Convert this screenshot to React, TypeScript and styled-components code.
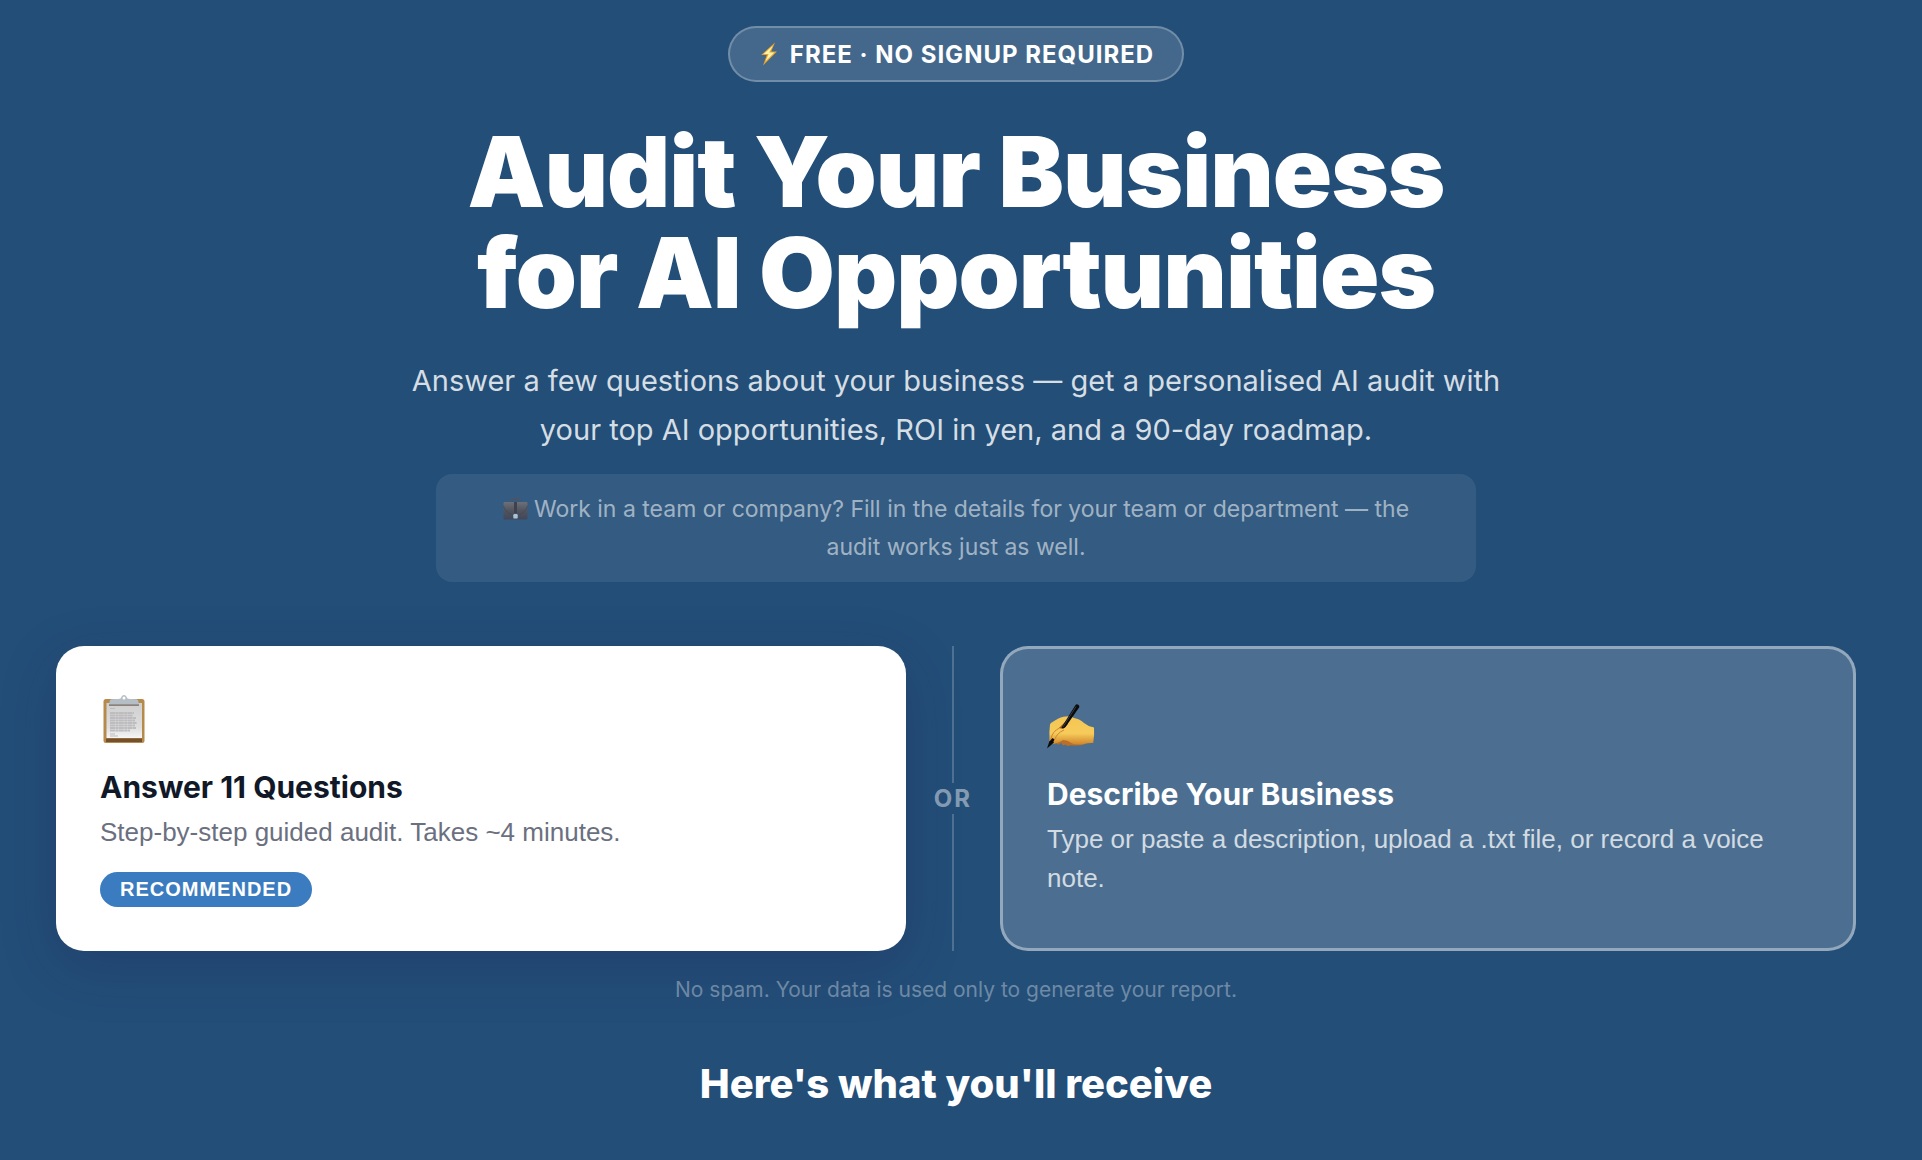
import React from "react";
import styled, { createGlobalStyle } from "styled-components";

const BODY_FONT = '"Inter", "Roboto", sans-serif';
const HEAD_FONT = '"Inter", sans-serif';
const BUTTON_FONT = '"Liberation Sans", Arial, sans-serif';

const GlobalStyle = createGlobalStyle`
  *, *::before, *::after { box-sizing: border-box; }
  html { background: #234e78; }
  body { margin: 0; font-family: ${BODY_FONT}; color: #fff; }
  h1, h2, p { margin: 0; }
`;

const Page = styled.main`
  min-height: 100vh;
  padding: 26px 66px 32px 56px;
  background: #234e78;
`;

const Hero = styled.header`
  display: flex;
  flex-direction: column;
  align-items: center;
  text-align: center;
`;

const Badge = styled.div`
  display: flex;
  align-items: center;
  gap: 12px;
  height: 56px;
  padding: 0 28px 0 30px;
  border: 2px solid rgba(255, 255, 255, 0.25);
  border-radius: 28px;
  background: rgba(255, 255, 255, 0.15);
  font-size: 24px;
  font-weight: 700;
  letter-spacing: 1px;
  text-transform: uppercase;
`;

const Title = styled.h1`
  margin-top: 39px;
  font-family: ${HEAD_FONT};
  font-size: 98px;
  font-weight: 900;
  line-height: 101px;
  letter-spacing: -1px;
`;

const Lead = styled.p`
  max-width: 1140px;
  margin-top: 33px;
  font-size: 29px;
  line-height: 49px;
  color: rgba(255, 255, 255, 0.82);
`;

const Note = styled.p`
  width: 100%;
  max-width: 1040px;
  margin-top: 20px;
  padding: 16px 40px;
  border-radius: 16px;
  background: rgba(255, 255, 255, 0.08);
  font-size: 23px;
  line-height: 38px;
  color: rgba(255, 255, 255, 0.55);
`;

const Choices = styled.section`
  display: grid;
  grid-template-columns: 850fr 94px 856fr;
  margin-top: 64px;
`;

const Choice = styled.button<{ $primary?: boolean }>`
  display: flex;
  flex-direction: column;
  align-items: flex-start;
  justify-content: center;
  min-height: 305px;
  padding: 44px 44px 40px;
  border: ${(p) => (p.$primary ? "0" : "3px solid rgba(255, 255, 255, 0.4)")};
  border-radius: 28px;
  background: ${(p) => (p.$primary ? "#fff" : "rgba(255, 255, 255, 0.19)")};
  box-shadow: ${(p) => (p.$primary ? "0 16px 56px rgba(30, 27, 75, 0.24)" : "none")};
  color: ${(p) => (p.$primary ? "#111827" : "#fff")};
  font-family: ${BUTTON_FONT};
  text-align: left;
  cursor: pointer;
`;

const ChoiceTitle = styled.span`
  margin-top: 20px;
  font-family: ${HEAD_FONT};
  font-size: 30px;
  font-weight: 700;
  line-height: 46px;
`;

const ChoiceText = styled.span<{ $primary?: boolean }>`
  margin-top: 3px;
  font-size: 26px;
  line-height: 39px;
  color: ${(p) => (p.$primary ? "#6b7080" : "rgba(255, 255, 255, 0.75)")};
`;

const Tag = styled.span`
  margin-top: 20px;
  padding: 0 20px;
  border-radius: 18px;
  background: #3b7bbf;
  color: #fff;
  font-size: 20px;
  font-weight: 700;
  line-height: 35px;
  letter-spacing: 1px;
`;

const Divider = styled.div`
  display: flex;
  flex-direction: column;
  align-items: center;
  font-size: 24px;
  font-weight: 700;
  line-height: 31px;
  letter-spacing: 2px;
  color: rgba(255, 255, 255, 0.45);

  &::before,
  &::after {
    content: "";
    flex: 1;
    width: 2px;
    background: rgba(255, 255, 255, 0.2);
  }
`;

const Privacy = styled.p`
  margin-top: 22px;
  font-size: 21px;
  line-height: 34px;
  text-align: center;
  color: rgba(255, 255, 255, 0.35);
`;

const SectionTitle = styled.h2`
  margin-top: 52px;
  font-family: ${HEAD_FONT};
  font-size: 40px;
  font-weight: 800;
  line-height: 50px;
  text-align: center;
`;

const EmojiSvg = styled.svg`
  flex: none;
  display: block;
`;

const BriefSvg = styled.svg`
  display: inline-block;
  margin-right: 6px;
  vertical-align: -3px;
`;

function Bolt() {
  return (
    <EmojiSvg width="18" height="24" viewBox="0 0 18 24" aria-hidden="true">
      <path d="M15 .5 1.2 13h5.6L3 23.5 17 9.6h-5.8z" fill="#e9a22c" />
      <path d="M13 3.6 3.6 12h5L5.4 19.4 14.4 10.6H9.2z" fill="#fff3a8" />
    </EmojiSvg>
  );
}

function Briefcase() {
  return (
    <BriefSvg width="25" height="22" viewBox="0 0 25 22" aria-hidden="true">
      <defs>
        <linearGradient id="case" x2="0" y2="1">
          <stop stopColor="#6d7079" />
          <stop offset=".5" stopColor="#50545f" />
          <stop offset="1" stopColor="#41465a" />
        </linearGradient>
      </defs>
      <path d="M8.5 4V1.8q0-.8.8-.8h6.4q.8 0 .8.8V4" fill="none" stroke="#50545f" strokeWidth="1.4" />
      <rect x=".5" y="4" width="24" height="17.6" rx="1" fill="url(#case)" />
      <path d="M.5 8q2 7 9 8.5h6q7-1.5 9-8.5" fill="none" stroke="#444957" strokeWidth=".8" />
      <rect x="11" y="4" width="3" height="11" fill="#3e424f" />
      <rect x="10.3" y="16" width="4.4" height="4.6" rx="1.2" fill="#a9c4d8" />
    </BriefSvg>
  );
}

function Clipboard() {
  return (
    <EmojiSvg width="48" height="50" viewBox="0 0 48 50" aria-hidden="true">
      <defs>
        <linearGradient id="paper" x2="0" y2="1">
          <stop stopColor="#cfcfd0" />
          <stop offset=".7" stopColor="#dededf" />
          <stop offset="1" stopColor="#f6f6f7" />
        </linearGradient>
      </defs>
      <rect x="3.5" y="5" width="41" height="44" rx="2.5" fill="#b58a4b" />
      <path d="M6 44.5h36v3.5H6z" fill="#74502d" />
      <path d="M6.5 9h35.5v35H6.5z" fill="url(#paper)" />
      <path d="M10 6q1-1 4-1h4.5q2.5 0 3-2.2Q22.2 1 24 1t2.5 1.8Q27 5 29.5 5H34q3 0 4 1l1 4.5H9z" fill="#b6bec5" />
      <circle cx="24" cy="4" r="1.5" fill="#fff" />
      <path d="M9 10.5h30v1.2H9z" fill="#6d6058" />
      <path d="M10 14.5h5M10 40h5M10 42h8" stroke="#bcbcbe" strokeWidth="1" />
      <path d="M10 19h24M10 21.5h23M10 24h26M10 26.5h25M10 29h27M10 31.5h25M10 34h26M10 36.5h20" stroke="#bdbdbf" strokeWidth="1.8" strokeDasharray="5 .4 3 .4" />
    </EmojiSvg>
  );
}

function WritingHand() {
  return (
    <EmojiSvg width="48" height="48" viewBox="0 0 48 48" aria-hidden="true">
      <defs>
        <linearGradient id="skin" x2="0" y2="1">
          <stop stopColor="#f4c653" />
          <stop offset=".6" stopColor="#f7cb5b" />
          <stop offset="1" stopColor="#cf852a" />
        </linearGradient>
      </defs>
      <path d="M8 37q2 6 4.5 4l2-1q1 3.5 4 1.5 2 2.5 5 .8 10 .7 14-1l-1-7-24-4z" fill="#b96f27" />
      <path d="M3 21.5q1-2 5-4 6-4 11-4 5-.8 8 1.5 6 1 10 5 4 3.5 10 4.5.6 8-.8 15.500-4-.5-9 1-9 1.500-13-1-4-3-8-3-4 2-7.500 3.500-6 1.500-6.200-2.500-.5-9 .5-16.500z" fill="url(#skin)" />
      <path d="M8 36q2-6 9-9M3.500 37q2-9 9-12" fill="none" stroke="#c98a30" strokeWidth="1" />
      <path d="M12 25l7-7 2 3-5 5z" fill="#9b5d20" />
      <path d="M14.500 24.500 28.500 2q1-1.500 2.800-.3 1.700 1.200.8 2.800L18.500 24q-1.500 2-4 .5z" fill="#0b0b0d" />
      <path d="M0 45.500l2.500-7.500q2-1 4.500 1.500z" fill="#0b0b0d" />
      <path d="M2.500 38.500l3-3.500 2 1.500-1.500 3z" fill="#0b0b0d" />
      <path d="M29 3.500 16 24" stroke="#5c5c60" strokeWidth=".6" />
    </EmojiSvg>
  );
}

export default function App() {
  return (
    <>
      <GlobalStyle />
      <Page>
        <Hero>
          <Badge>
            <Bolt />
            <span>Free · No signup required</span>
          </Badge>
          <Title>
            Audit Your Business
            <br />
            for AI Opportunities
          </Title>
          <Lead>
            Answer a few questions about your business — get a personalised AI audit with
            <br />
            your top AI opportunities, ROI in yen, and a 90-day roadmap.
          </Lead>
          <Note>
            <Briefcase />
            Work in a team or company? Fill in the details for your team or department — the
            <br />
            audit works just as well.
          </Note>
        </Hero>
        <Choices>
          <Choice type="button" $primary>
            <Clipboard />
            <ChoiceTitle>Answer 11 Questions</ChoiceTitle>
            <ChoiceText $primary>Step-by-step guided audit. Takes ~4 minutes.</ChoiceText>
            <Tag>RECOMMENDED</Tag>
          </Choice>
          <Divider>OR</Divider>
          <Choice type="button">
            <WritingHand />
            <ChoiceTitle>Describe Your Business</ChoiceTitle>
            <ChoiceText>Type or paste a description, upload a .txt file, or record a voice note.</ChoiceText>
          </Choice>
        </Choices>
        <Privacy>No spam. Your data is used only to generate your report.</Privacy>
        <SectionTitle>Here's what you'll receive</SectionTitle>
      </Page>
    </>
  );
}
